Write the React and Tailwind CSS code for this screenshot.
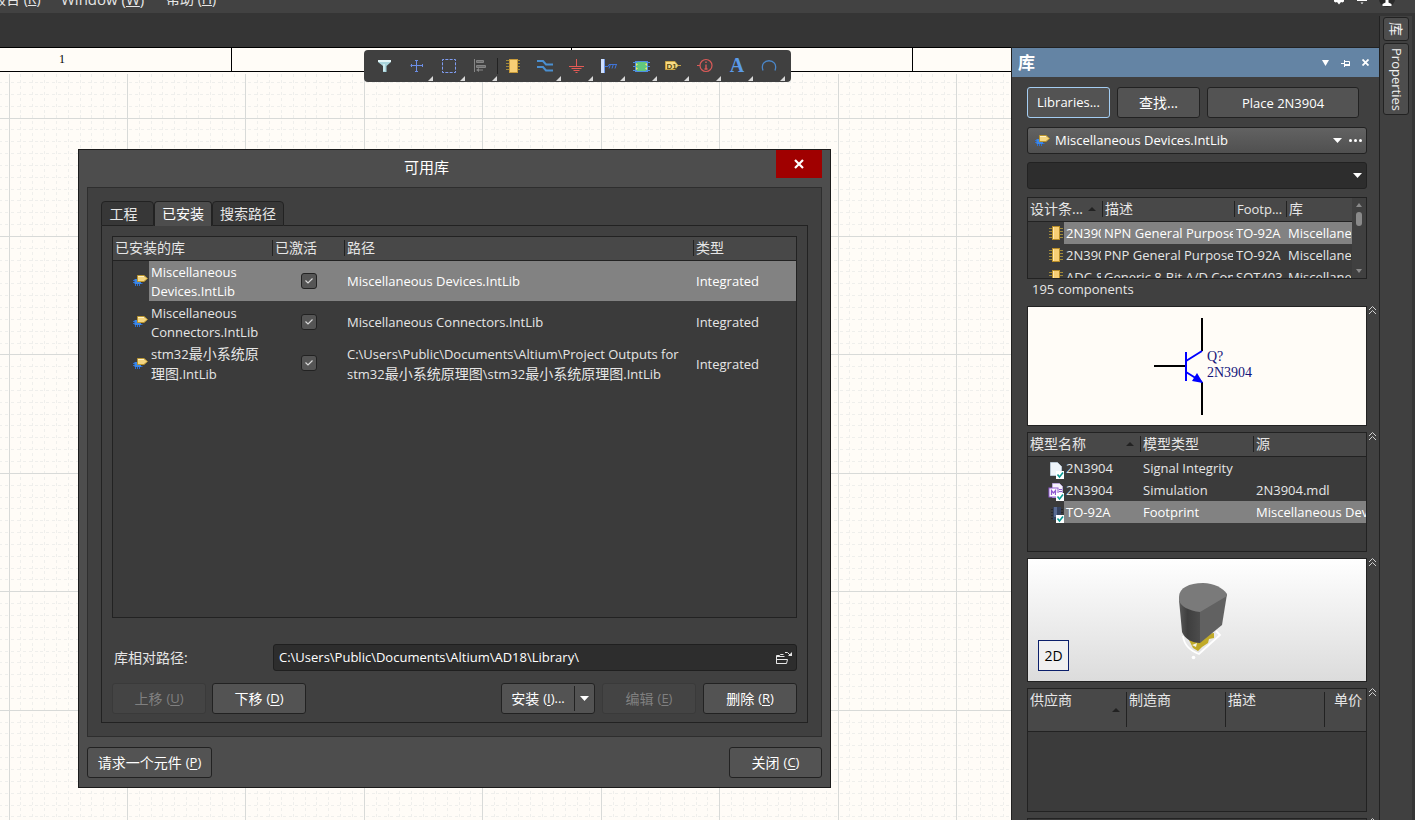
import React from "react";

const MAJOR = 118.45;
const MINOR = MAJOR / 10;

function SheetGrid() {
  const lines = [];
  for (let i = -9; i < 160; i++) {
    const major = i % 10 === 0;
    const x = Math.floor(9 + i * MINOR) + 0.5;
    const y = Math.floor(118 + (i - 10) * MINOR) + 0.5;
    const stroke = major ? "#d8dad8" : "#efefec";
    const dash = major ? undefined : "3 2.9225";
    if (x > 0) lines.push({ k: "v" + i, x1: x, x2: x, y1: 74, y2: 2000, stroke, dash, major });
    if (y > 72) lines.push({ k: "h" + i, x1: -1, x2: 2000, y1: y, y2: y, stroke, dash, major });
  }
  lines.sort((a, b) => a.major - b.major);
  return (
    <svg className="absolute inset-0 h-full w-full" aria-hidden="true">
      <g transform="translate(0 -48)">
        {lines.map((l) => (
          <line
            key={l.k}
            x1={l.x1}
            x2={l.x2}
            y1={l.y1}
            y2={l.y2}
            stroke={l.stroke}
            strokeDasharray={l.dash}
            shapeRendering="crispEdges"
          />
        ))}
        <rect x="0" y="47" width="2000" height="24" fill="#fffcf7" />
        <path d="M0 71.5H2000M231.5 48V71M571.5 48V71M912.5 48V71" stroke="#000" />
      </g>
    </svg>
  );
}

function LibIcon() {
  return (
    <svg width="15" height="13" viewBox="0 0 15 13" className="shrink-0" aria-hidden="true">
      <path d="M0 6.5H3M0 8.5H3M2.5 12V9M4.5 12V9M6.5 12V9M8 9.500H9.500" stroke="#2e6fd0" />
      <path d="M1.500 5H4V7.500H8V10H1.500Z" fill="#3a86e8" />
      <path d="M4.500 1.500H11L14.500 4.500L11 7.500H4.500Z" fill="#f4d580" stroke="#b9952f" />
      <path d="M5 2.500H11" stroke="#fff1c4" />
    </svg>
  );
}

function ChipIcon() {
  return (
    <svg width="16" height="16" viewBox="0 0 16 16" className="shrink-0" aria-hidden="true">
      <path d="M1 3.5H15M1 6.5H15M1 9.5H15M1 12.5H15" stroke="#a08a3a" />
      <rect x="4.5" y="1.5" width="7" height="13" fill="#f8cf74" stroke="#b88d28" />
      <path d="M5.5 2V14" stroke="#fde8b0" />
    </svg>
  );
}

function CheckBadge() {
  return (
    <g>
      <rect x="8" y="10" width="8" height="8" fill="#fff" />
      <path d="M9.5 13.5L11.5 16L15 11.5" fill="none" stroke="#0b9a94" strokeWidth="1.6" />
    </g>
  );
}

function ModelIcon({ kind }) {
  return (
    <svg width="16" height="18" viewBox="0 0 16 18" className="shrink-0" aria-hidden="true">
      {kind === "doc" && (
        <path d="M2.5 1.5H9.5L13.5 5.5V14.5H2.5Z" fill="#eef4fa" stroke="#b9c6d3" />
      )}
      {kind === "sim" && (
        <g>
          <path d="M4.5 .5H11.5L14.5 3.5V14.5H4.5Z" fill="#f6f2fb" stroke="#b9a8d8" />
          <path d="M11 6.5H14M11 8.5H14" stroke="#8a5cc8" />
          <rect x="1" y="5" width="9" height="9" fill="#fff" stroke="#8e58d0" />
          <path d="M3.5 12V7.5L5.5 10L7.5 7.5V12" fill="none" stroke="#8e58d0" strokeWidth="1.3" />
        </g>
      )}
      {kind === "foot" && (
        <g>
          <path d="M3 4.5H15M3 7.5H15M3 10.5H15M3 13.5H15" stroke="#26262c" />
          <rect x="5" y="2" width="8" height="13" fill="#35425f" />
          <rect x="6" y="2" width="3" height="10" fill="#5a6b92" />
        </g>
      )}
      <CheckBadge />
    </svg>
  );
}

function Caret() {
  return (
    <svg width="9" height="5" viewBox="0 0 9 5" aria-hidden="true">
      <path d="M0 0H9L4.5 5Z" fill="#fff" />
    </svg>
  );
}

function SortMark() {
  return (
    <svg width="8" height="4" viewBox="0 0 8 4" className="shrink-0" aria-hidden="true">
      <path d="M0 4L4 0L8 4Z" fill="#222" />
    </svg>
  );
}

/* Latin text is set at 13px; runs of Chinese inside it at 14px. */
function Mixed({ text }) {
  return text.split(/([\u4e00-\u9fff]+)/).map((run, i) =>
    i % 2 ? (
      <span key={i} className="text-[14px]">
        {run}
      </span>
    ) : (
      run
    )
  );
}

const TOOLS = [
  {
    name: "Filter",
    art: (
      <g>
        <path d="M3 4H16V6L11.500 10V16H8V10L3 6Z" fill="#a9d5dd" />
        <path d="M3 4H16V6H3Z" fill="#e4f6f8" />
        <path d="M9 8V15" stroke="#d8f0f3" strokeWidth="1.500" />
      </g>
    ),
  },
  {
    name: "Move",
    more: true,
    art: (
      <g stroke="#6c8ee6" fill="none">
        <path d="M9.500 4V16M3.500 9.500H15.500" />
        <path d="M8 4.500H11M8 15.500H11M4.500 8V11M15.500 8V11" />
      </g>
    ),
  },
  {
    name: "Select area",
    more: true,
    art: <rect x="3.5" y="3.5" width="13" height="13" fill="none" stroke="#7f9cf0" strokeDasharray="3 1.333" strokeDashoffset="1.500" />,
  },
  {
    name: "Align",
    more: true,
    art: (
      <g fill="#858585">
        <path d="M3 3H4V16H3Z" />
        <path d="M5.500 4.500H12.500V6.500H5.500Z" fill="#6e6e6e" stroke="#858585" />
        <path d="M5.500 9.500H14.500V11.500H5.500Z" fill="#6e6e6e" stroke="#858585" />
        <path d="M5 14L8 12V16ZM8 13.500H12V14.500H8Z" />
      </g>
    ),
  },
  {
    name: "Place part",
    art: (
      <g>
        <path d="M3 4.5H17M3 7.5H17M3 10.5H17M3 13.5H17" stroke="#a08a3a" />
        <rect x="6.5" y="3.5" width="8" height="13" fill="#f8cf74" stroke="#c79a3a" />
      </g>
    ),
  },
  {
    name: "Place wire",
    more: true,
    art: (
      <g fill="none" stroke="#4a8fd0" strokeWidth="2">
        <path d="M2 5H8L11 8.500H18" />
        <path d="M2 11H8L11 14.500H18" />
      </g>
    ),
  },
  {
    name: "Place power port",
    more: true,
    art: (
      <g stroke="#e35a55" fill="none">
        <path d="M9.500 3V10M2 10.500H17M4.500 12.500H14.500M6.500 14.500H12.500M8.500 16.500H10.500" />
      </g>
    ),
  },
  {
    name: "Place bus entry",
    more: true,
    art: (
      <g>
        <path d="M2 3H5V17H2Z" fill="#cfe0ff" />
        <path d="M5.500 3V17" stroke="#6d97e8" />
        <path d="M6 10.500H9M10 12.500L11.500 8M13 12.500L14.500 8M16 12.500L17.500 8M9 10.500L10 8.500H18" stroke="#3f74d8" fill="none" />
      </g>
    ),
  },
  {
    name: "Place sheet symbol",
    more: true,
    art: (
      <g>
        <rect x="4.5" y="5.5" width="12" height="10" fill="#62c87e" stroke="#4f8fe0" />
        <path d="M2 6.5H6M2 10.5H5M2 14.5H6M15 6.5H19M16 10.5H19M15 14.5H19" stroke="#4f8fe0" />
        <path d="M5 7L7 8.5L5 10ZM5 11L7 12.5L5 14ZM16 7L14 8.5L16 10ZM16 11L14 12.5L16 14Z" fill="#f2e36b" />
      </g>
    ),
  },
  {
    name: "Place port",
    more: true,
    art: (
      <g>
        <path d="M14 9.500H18" stroke="#c9a545" />
        <path d="M2.500 5.500H12L15 9.500L12 13.500H2.500Z" fill="#f8dc86" stroke="#c9a545" />
        <text x="3.500" y="12.500" fontSize="8" fontWeight="700" fill="#5b4a10" className="font-['Liberation_Sans',sans-serif]">
          D1
        </text>
      </g>
    ),
  },
  {
    name: "Place directive",
    more: true,
    art: (
      <g stroke="#d95a58" fill="none">
        <circle cx="11" cy="9.500" r="6" strokeWidth="1.200" />
        <path d="M2 9.500H5" />
        <path d="M11 5.500V7M11 8.500V13M9.500 13H12.500" strokeWidth="1.400" />
      </g>
    ),
  },
  {
    name: "Place text",
    more: true,
    art: (
      <text x="10" y="16" textAnchor="middle" fontSize="20" fontWeight="700" fill="#5b9be8" className="font-['Liberation_Serif',serif]">
        A
      </text>
    ),
  },
  {
    name: "Place arc",
    more: true,
    art: <path d="M4 14.500C-.5 1.500 20.500 1.500 16 14.500" fill="none" stroke="#4a86c8" strokeWidth="1.300" />,
  },
];

function Toolbar() {
  return (
    <div role="toolbar" aria-label="Schematic tools" className="absolute top-[2px] left-[364px] flex h-8 items-stretch rounded bg-[#404040] pr-[6px] pl-[5px]">
      {TOOLS.map((t) => (
        <button key={t.name} type="button" aria-label={t.name} className="relative flex w-8 items-center justify-center">
          {t.name === "Place part" && <span className="absolute top-2 left-0 h-4 w-px bg-[#222]" />}
          <svg width="20" height="20" viewBox="0 0 20 20" aria-hidden="true">
            {t.art}
          </svg>
          {t.more && (
            <svg width="5" height="5" viewBox="0 0 5 5" className="absolute right-0 bottom-[1px]" aria-hidden="true">
              <path d="M5 0V5H0Z" fill="#d8d8d8" />
            </svg>
          )}
        </button>
      ))}
    </div>
  );
}

function Btn({ children, className = "", disabled }) {
  return (
    <button
      type="button"
      disabled={disabled}
      className={
        "flex h-[31px] items-center justify-center gap-1 rounded-[3px] border text-sm whitespace-nowrap " +
        (disabled ? "border-[#3a3a3a] bg-[#444] text-[#808080] " : "border-[#222] bg-[#535353] text-white ") +
        className
      }
    >
      {children}
    </button>
  );
}

function Key({ k, after = "" }) {
  return (
    <span className="text-[13px]">
      (<u className="underline-offset-2">{k}</u>){after}
    </span>
  );
}

const LIBRARIES = [
  { name: "Miscellaneous Devices.IntLib", path: "Miscellaneous Devices.IntLib", selected: true },
  { name: "Miscellaneous Connectors.IntLib", path: "Miscellaneous Connectors.IntLib" },
  {
    name: "stm32最小系统原理图.IntLib",
    path: "C:\\Users\\Public\\Documents\\Altium\\Project Outputs for stm32最小系统原理图\\stm32最小系统原理图.IntLib",
  },
];

function HeadCell({ children, first, sort, className = "", colSpan }) {
  return (
    <th colSpan={colSpan} scope="col" className={"overflow-hidden p-0 text-left font-normal " + className}>
      <div className={"flex h-4 items-center justify-between pr-[6px] pl-[2px] leading-4 whitespace-nowrap " + (first ? "" : "border-l border-[#222]")}>
        <span>{children}</span>
        {sort && <SortMark />}
      </div>
    </th>
  );
}

function LibraryTable() {
  return (
    <div className="h-[382px] border border-[#222] bg-[#3b3b3b]">
      <table className="w-full table-fixed border-collapse text-[13px] leading-[19px] text-[#e6e6e6]">
        <colgroup>
          <col className="w-9" />
          <col className="w-[123px]" />
          <col className="w-[72px]" />
          <col />
          <col className="w-[103px]" />
        </colgroup>
        <thead>
          <tr className="h-[23px] border-b border-[#222] bg-[#484848] text-sm">
            <HeadCell colSpan={2} first>已安装的库</HeadCell>
            <HeadCell>已激活</HeadCell>
            <HeadCell>路径</HeadCell>
            <HeadCell>类型</HeadCell>
          </tr>
        </thead>
        <tbody>
          {LIBRARIES.map((l) => {
            const bg = l.selected ? "bg-[#828282] text-white" : "";
            return (
              <tr key={l.name} className="h-[41px]">
                <td className="p-0">
                  <div className="flex justify-end pr-px">
                    <LibIcon />
                  </div>
                </td>
                <td className={"pt-[2px] pr-2 pb-0 pl-[2px] " + bg}><Mixed text={l.name} /></td>
                <td className={"p-0 pl-[29px] " + bg}>
                  <label className="grid h-4 w-4">
                    <span className="sr-only">{l.name}</span>
                    <input
                      type="checkbox"
                      defaultChecked
                      className="h-4 w-4 appearance-none rounded-[3px] border border-[#222] bg-[#555] [grid-area:1/1]"
                    />
                    <svg viewBox="0 0 16 16" className="pointer-events-none h-4 w-4 [grid-area:1/1]" aria-hidden="true">
                      <path d="M4.500 7.500L7 10L11.500 5.500" fill="none" stroke="#d8d8d8" strokeWidth="1.200" />
                    </svg>
                  </label>
                </td>
                <td className={"pt-[2px] pr-2 pb-0 pl-[3px] " + bg}><Mixed text={l.path} /></td>
                <td className={"pt-[2px] pb-0 pl-[3px] " + bg}>Integrated</td>
              </tr>
            );
          })}
        </tbody>
      </table>
    </div>
  );
}

function Dialog() {
  return (
    <section
      role="dialog"
      aria-labelledby="dlg-title"
      className="absolute top-[101px] left-[78px] w-[753px] border border-[#1b1b1b] bg-[#4d4d4d] px-2 pb-[9px]"
    >
      <header className="flex h-[37px] items-start">
        <h1 id="dlg-title" className="flex-1 pr-[10px] text-center text-[15px] leading-[35px] text-white">
          可用库
        </h1>
        <button type="button" aria-label="Close" className="flex h-7 w-[46px] items-center justify-center bg-[#a00000]">
          <svg width="10" height="10" viewBox="0 0 10 10" aria-hidden="true">
            <path d="M1 1L9 9M9 1L1 9" stroke="#fff" strokeWidth="2.200" />
          </svg>
        </button>
      </header>

      <div className="border border-[#2e2e2e] bg-[#404040] px-[13px] pt-[13px] pb-[13px]">
        <div role="tablist" className="flex h-[25px] items-start text-sm text-[#e6e6e6]">
          <button type="button" role="tab" aria-selected="false" className="h-[25px] w-[53px] rounded-t border border-[#222] bg-[#373737] pr-2">
            工程
          </button>
          <button type="button" role="tab" aria-selected="true" className="h-[25px] w-[58px] rounded-t border border-b-0 border-[#222] bg-[#4d4d4d] text-white">
            已安装
          </button>
          <button type="button" role="tab" aria-selected="false" className="h-[25px] w-[72px] rounded-t border border-[#222] bg-[#373737]">
            搜索路径
          </button>
          <span className="h-full flex-1 border-b border-[#222]" />
        </div>
        <div role="tabpanel" className="border border-t-0 border-[#222] px-[10px] pt-[10px] pb-2">
          <LibraryTable />
          <div className="mt-[26px] flex items-center">
            <label htmlFor="lib-path" className="w-[161px] pl-[2px] text-sm text-[#e6e6e6]">
              库相对路径:
            </label>
            <div className="flex h-[27px] flex-1 items-center rounded-[3px] border border-[#1f1f1f] bg-[#2d2d2d] pr-[3px]">
              <input
                id="lib-path"
                defaultValue="C:\Users\Public\Documents\Altium\AD18\Library\"
                className="min-w-0 flex-1 bg-transparent pl-[5px] text-[13px] text-white outline-none"
              />
              <button type="button" aria-label="Browse">
                <svg width="18" height="14" viewBox="0 0 18 14" fill="none" stroke="#e6e6e6" aria-hidden="true">
                  <path d="M1.500 12.500V4.500H4.500L5.500 3.500H8.500M1.500 5.500H9.500" />
                  <path d="M1.500 12.500V8.500H12.500L11.500 12.500Z" />
                  <path d="M10 1.500H12.500L15 4" />
                  <path d="M13 5H17V1Z" fill="#e6e6e6" stroke="none" />
                </svg>
              </button>
            </div>
          </div>
          <div className="mt-3 flex">
            <Btn disabled className="w-[94px]">上移 <Key k="U" /></Btn>
            <Btn className="ml-[6px] w-[94px]">下移 <Key k="D" /></Btn>
            <div className="ml-auto flex h-[31px] w-[94px] items-center rounded-[3px] border border-[#222] bg-[#535353] text-sm text-white">
              <button type="button" className="flex flex-1 items-center justify-center gap-1 whitespace-nowrap">
                安装 <Key k="I" after="..." />
              </button>
              <span className="h-[25px] w-px bg-[#222]" />
              <button type="button" aria-label="安装选项" className="flex h-full w-[19px] items-center justify-center">
                <Caret />
              </button>
            </div>
            <Btn disabled className="ml-[7px] w-[94px]">编辑 <Key k="E" /></Btn>
            <Btn className="ml-[7px] w-[94px]">删除 <Key k="R" /></Btn>
          </div>
        </div>
      </div>

      <footer className="flex justify-between pt-[10px]">
        <Btn className="w-[125px]">请求一个元件 <Key k="P" /></Btn>
        <Btn className="w-[93px]">关闭 <Key k="C" /></Btn>
      </footer>
    </section>
  );
}

function Section({ children, className = "" }) {
  return (
    <div className="flex items-start">
      <div className={"min-w-0 flex-1 overflow-hidden border border-[#222] " + className}>{children}</div>
      <button type="button" aria-label="Collapse" className="w-3 pl-[1px]">
        <svg width="9" height="9" viewBox="0 0 9 9" fill="none" stroke="#d0d0d0" aria-hidden="true">
          <path d="M1 4L4.500 .5L8 4M1 8L4.500 4.500L8 8" />
        </svg>
      </button>
    </div>
  );
}

const PARTS = [
  ["2N3904", "NPN General Purpose Amplifier", "TO-92A", "Miscellaneous Devices.IntLib"],
  ["2N3906", "PNP General Purpose Amplifier", "TO-92A", "Miscellaneous Devices.IntLib"],
  ["ADC-8", "Generic 8-Bit A/D Converter", "SOT403", "Miscellaneous Devices.IntLib"],
];

const MODELS = [
  ["doc", "2N3904", "Signal Integrity", ""],
  ["sim", "2N3904", "Simulation", "2N3904.mdl"],
  ["foot", "TO-92A", "Footprint", "Miscellaneous Devices.IntLib"],
];

function PartsTable() {
  return (
    <div className="mr-3 flex h-[82px] overflow-hidden border border-[#222] bg-[#3b3b3b]">
      <div className="min-w-0 flex-1">
        <table className="w-full table-fixed border-collapse text-[13px] leading-[22px] whitespace-nowrap text-[#e6e6e6]">
          <colgroup>
            <col className="w-9" />
            <col className="w-[38px]" />
            <col />
            <col className="w-[52px]" />
            <col className="w-[66px]" />
          </colgroup>
          <thead>
            <tr className="h-[23px] border-b border-[#222] bg-[#484848] text-sm">
              <HeadCell colSpan={2} first sort>设计条...</HeadCell>
              <HeadCell>描述</HeadCell>
              <HeadCell><span className="text-[13px]">Footp...</span></HeadCell>
              <HeadCell>库</HeadCell>
            </tr>
          </thead>
          <tbody>
            {PARTS.map((p, i) => (
              <tr key={p[0]} className="h-[22px]">
                <td className="p-0">
                  <div className="flex justify-end"><ChipIcon /></div>
                </td>
                {p.map((c) => (
                  <td key={c} className={"overflow-hidden py-0 pr-px pl-[2px] " + (i === 0 ? "bg-[#828282] text-white" : "")}>
                    <div className="overflow-hidden">{c}</div>
                  </td>
                ))}
              </tr>
            ))}
          </tbody>
        </table>
      </div>
      <div className="flex w-[14px] flex-col items-center bg-[#404040] py-[5px]">
        <svg width="6" height="4" viewBox="0 0 6 4" aria-hidden="true"><path d="M0 4L3 0L6 4Z" fill="#8a8a8a" /></svg>
        <span className="mt-[5px] h-[14px] w-[6px] rounded-full bg-[#8a8a8a]" />
        <svg width="6" height="4" viewBox="0 0 6 4" className="mt-auto" aria-hidden="true"><path d="M0 0H6L3 4Z" fill="#8a8a8a" /></svg>
      </div>
    </div>
  );
}

function ModelsTable() {
  return (
    <table className="w-full table-fixed border-collapse text-[13px] leading-[22px] whitespace-nowrap text-[#e6e6e6]">
      <colgroup>
        <col className="w-9" />
        <col className="w-[76px]" />
        <col className="w-[113px]" />
        <col />
      </colgroup>
      <thead>
        <tr className="h-[23px] border-b border-[#222] bg-[#484848] text-sm">
          <HeadCell colSpan={2} first sort>模型名称</HeadCell>
          <HeadCell>模型类型</HeadCell>
          <HeadCell>源</HeadCell>
        </tr>
      </thead>
      <tbody>
        {MODELS.map(([kind, name, type, src]) => {
          const bg = kind === "foot" ? "bg-[#828282] text-white" : "";
          return (
            <tr key={kind} className="h-[22px]">
              <td className="p-0">
                <div className="flex h-[22px] items-end justify-end"><ModelIcon kind={kind} /></div>
              </td>
              <td className={"py-0 pl-[2px] " + bg}>{name}</td>
              <td className={"py-0 pl-[3px] " + bg}>{type}</td>
              <td className={"overflow-hidden py-0 pr-0 pl-[3px] " + bg}>{src}</td>
            </tr>
          );
        })}
      </tbody>
    </table>
  );
}

function SupplierTable() {
  return (
    <table className="w-full table-fixed border-collapse text-sm whitespace-nowrap text-[#e6e6e6]">
      <colgroup>
        <col className="w-[98px]" />
        <col className="w-[99px]" />
        <col className="w-[99px]" />
        <col />
      </colgroup>
      <thead>
        <tr className="h-[42px] border-b border-[#222] bg-[#484848]">
          {["供应商", "制造商", "描述", "单价"].map((h, i) => (
            <th key={h} scope="col" className="p-0 font-normal">
              <div className={"flex h-[35px] items-start justify-between pr-[6px] pl-[2px] leading-4 " + (i ? "border-l border-[#222]" : "")}>
                <span className={i === 3 ? "pl-[7px]" : ""}>{h}</span>
                {i === 0 && <span className="self-center"><SortMark /></span>}
              </div>
            </th>
          ))}
        </tr>
      </thead>
    </table>
  );
}

function SymbolPreview() {
  return (
    <svg viewBox="0 0 337 118" className="mx-auto h-full" role="img" aria-label="2N3904 symbol">
      <path d="M173 11V44M173 75V108M125 59H156" stroke="#000" strokeWidth="2" />
      <path d="M157 45V74M157 54L173 44M157 65L173 75" stroke="#00f" strokeWidth="2" fill="none" />
      <path d="M174 76L163 74L168 66Z" fill="#00f" />
      <g fill="#14147a" fontSize="14" className="font-['Liberation_Serif',serif]">
        <text x="178" y="54">Q?</text>
        <text x="178" y="70">2N3904</text>
      </g>
    </svg>
  );
}

function BodyPreview() {
  return (
    <svg viewBox="1028 559 337 122" className="mx-auto h-full" role="img" aria-label="TO-92A body">
      <defs>
        <linearGradient id="side" x1="0" x2="1" y1="0" y2="0">
          <stop offset="0" stopColor="#5a5a5a" />
          <stop offset="0.400" stopColor="#3e3e3e" />
          <stop offset="1" stopColor="#4c4c4c" />
        </linearGradient>
      </defs>
      <path d="M1182 636C1183 645 1190 651 1198 654L1219 635L1215 631" fill="none" stroke="#fff" strokeWidth="1.800" />
      <circle cx="1192.500" cy="657.500" r="1.800" fill="#fff" />
      <path d="M1188 640L1192 648L1197 651L1201 647L1207 643L1208 639L1213 638V633L1206 634L1199 640Z" fill="#c0aa28" />
      <path d="M1191 645L1196 643L1195 647Z" fill="#f4f4e8" />
      <path d="M1178 600L1181 632C1184 639 1191 643 1199 643V611Z" fill="url(#side)" />
      <path d="M1199 611L1226 594L1221 625L1199 643Z" fill="#616161" />
      <path d="M1178 597C1178 588 1188 583 1202 583C1213 583 1222 588 1226 594V596L1199 612C1188 611 1179 606 1178 600Z" fill="#7a7a7a" />
    </svg>
  );
}

function LibraryPanel() {
  return (
    <aside className="mt-[34px] w-[368px] shrink-0 border-t border-l border-[#222] bg-[#404040]">
      <header className="flex h-[29px] items-center bg-[#6484a4] pr-[10px] pl-[6px]">
        <h2 className="flex-1 text-[17px] leading-none font-bold text-white">库</h2>
        <div className="flex items-center gap-[12px]">
          <button type="button" aria-label="Menu">
            <svg width="7" height="6" viewBox="0 0 7 6" aria-hidden="true"><path d="M0 0H7L3.500 6Z" fill="#fff" /></svg>
          </button>
          <button type="button" aria-label="Pin">
            <svg width="9" height="8" viewBox="0 0 9 8" fill="none" stroke="#fff" aria-hidden="true">
              <path d="M0 4.500H3M3.500 1V8M4 2.500H8.500V6" />
              <path d="M4 6H9" strokeWidth="2" />
            </svg>
          </button>
          <button type="button" aria-label="Close panel">
            <svg width="7" height="7" viewBox="0 0 7 7" aria-hidden="true"><path d="M.5 .5L6.500 6.500M6.500 .5L.5 6.500" stroke="#fff" strokeWidth="1.800" /></svg>
          </button>
        </div>
      </header>

      <div className="flex flex-col pt-[10px] pl-[15px]">
        <div className="flex gap-[7px] pr-5">
          <button type="button" className="h-[31px] w-[83px] rounded-[3px] border border-[#a4cdf2] bg-[#535353] pt-px text-[13px] text-white">
            Libraries...
          </button>
          <Btn className="w-[83px]">查找...</Btn>
          <Btn className="flex-1 pt-px"><span className="text-[13px]">Place 2N3904</span></Btn>
        </div>

        <div className="mt-[9px] mr-3 flex h-[27px] items-center rounded-[3px] border border-[#222] bg-linear-to-b from-[#626262] to-[#505050] pr-1 pl-[7px] text-white">
          <LibIcon />
          <select aria-label="Library" className="h-full min-w-0 flex-1 appearance-none bg-transparent pt-px pl-[5px] text-[13px] outline-none">
            <option>Miscellaneous Devices.IntLib</option>
          </select>
          <Caret />
          <button type="button" aria-label="More" className="ml-[7px] flex gap-[2px]">
            <span className="h-[3px] w-[3px] rounded-full bg-white" />
            <span className="h-[3px] w-[3px] rounded-full bg-white" />
            <span className="h-[3px] w-[3px] rounded-full bg-white" />
          </button>
        </div>

        <div className="mt-2 mr-3 mb-2 flex h-[27px] items-center rounded-[3px] border border-[#222] bg-[#2d2d2d] pr-1">
          <input aria-label="Filter" className="h-full min-w-0 flex-1 bg-transparent px-1 text-[13px] text-white outline-none" />
          <button type="button" aria-label="Filter history"><Caret /></button>
        </div>

        <PartsTable />
        <p className="h-[27px] pl-[5px] text-[13px] leading-[21px] text-[#e6e6e6]">195 components</p>

        <div className="flex flex-col gap-[6px]">
          <Section className="h-[120px] bg-[#fffcf7]"><SymbolPreview /></Section>
          <Section className="h-[120px] bg-[#3b3b3b]"><ModelsTable /></Section>
          <Section className="relative h-[124px] bg-linear-to-b from-white to-[#dcdcdc]">
            <BodyPreview />
            <button type="button" className="absolute bottom-[10px] left-[10px] h-[31px] w-[31px] border border-[#0b1f6b] bg-[#f0f0f0] text-sm text-black">
              2D
            </button>
          </Section>
          <Section className="h-[124px] bg-[#3b3b3b]"><SupplierTable /></Section>
          <Section className="h-[124px] bg-[#3b3b3b]" />
        </div>
      </div>
    </aside>
  );
}

export default function App() {
  return (
    <div className="flex h-screen flex-col overflow-hidden bg-[#353535] font-['Open_Sans','Noto_Sans_CJK_SC',sans-serif]">
      <nav className="flex h-[13px] shrink-0 items-end overflow-hidden bg-[#424242] pb-1 text-sm leading-5 text-[#e6e6e6]">
        <a href="#report" className="-ml-2 w-[69px] shrink-0 whitespace-nowrap">报告 (<u>R</u>)</a>
        <a href="#window" className="w-[105px] shrink-0 whitespace-nowrap text-[15px]">Window (<u>W</u>)</a>
        <a href="#help" className="shrink-0 whitespace-nowrap">帮助 (<u>H</u>)</a>
        <div className="ml-auto flex items-start gap-3 self-start pr-[20px]">
          <svg width="12" height="8" viewBox="0 0 12 8" aria-hidden="true">
            <path d="M1 0H11V1.500L9.500 2.500L8 2L6 4.500L4 2L2.500 2.500L1 1.500Z" fill="#fff" />
          </svg>
          <svg width="10" height="8" viewBox="0 0 10 8" aria-hidden="true">
            <path d="M0 0H10V1H0ZM3.500 2.500H6.500L5 4Z" fill="#fff" />
          </svg>
          <svg width="16" height="8" viewBox="0 0 16 8" aria-hidden="true">
            <path d="M0 0H16C15 4 12 7 8 7C4 7 1 4 0 0Z" fill="#2a2a2a" />
            <path d="M6.500 0H9.500V2.500L12.500 4V6H3.500V4L6.500 2.500Z" fill="#fff" />
          </svg>
        </div>
      </nav>

      <div className="flex min-h-0 flex-1">
        <main className="relative mt-[34px] min-w-0 flex-1 overflow-hidden border-t border-black bg-[#fffcf7]">
          <SheetGrid />
          <span className="relative ml-[59px] block w-2 text-[12px] leading-[23px] text-black font-['Liberation_Serif',serif]">1</span>
          <Toolbar />
          <Dialog />
        </main>

        <LibraryPanel />

        <div className="mt-[3px] mr-[3px] flex w-[33px] shrink-0 flex-col items-start gap-[2px] border-l border-[#222] bg-[#404040] pt-px pl-[3px] text-[#f0f0f0]">
          <button type="button" className="flex h-6 w-[26px] items-center justify-center rounded-[3px] border border-[#222] bg-[#4d4d4d] text-sm [text-orientation:sideways] [writing-mode:vertical-rl]">
            库
          </button>
          <button type="button" className="flex h-[72px] w-[26px] items-center justify-center rounded-[3px] border border-[#222] bg-[#4d4d4d] text-[13px] [text-orientation:sideways] [writing-mode:vertical-rl]">
            Properties
          </button>
        </div>
      </div>
    </div>
  );
}
